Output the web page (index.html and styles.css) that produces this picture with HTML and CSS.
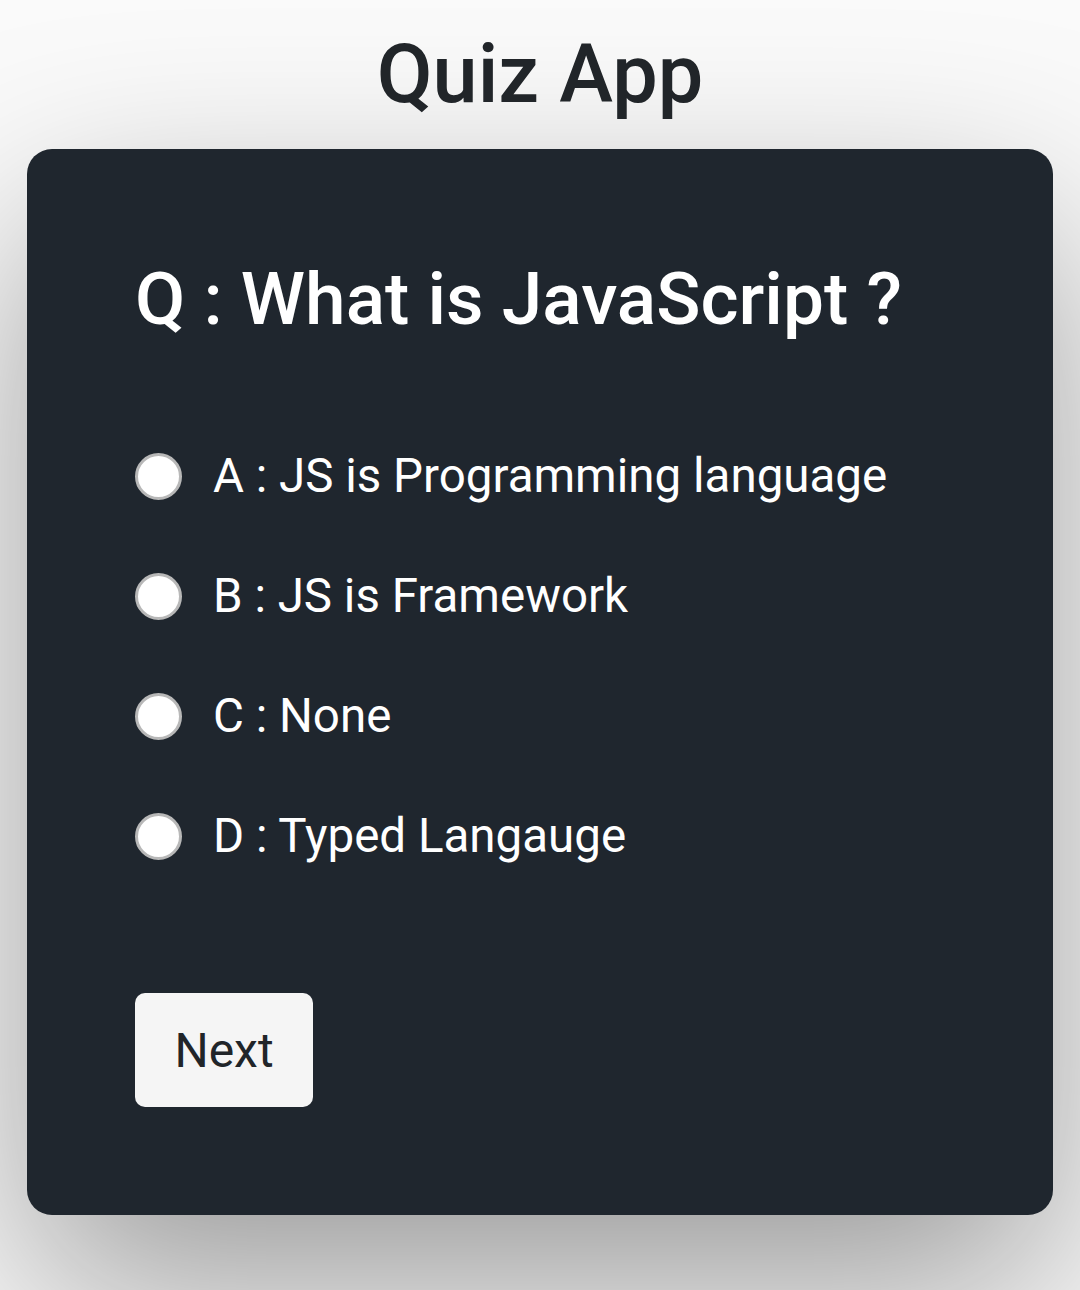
FILE: index.html
```html
<!DOCTYPE html>
<html lang="en">
<head>
<meta charset="utf-8">
<title>Quiz App</title>
<link rel="stylesheet" href="styles.css">
</head>
<body>
  <h1 class="app-title">Quiz App</h1>
  <main class="quiz-card">
    <h2 class="question">Q : What is JavaScript ?</h2>
    <ul class="options">
      <li class="option"><input type="radio" name="answer" id="a" class="radio"><label for="a">A : JS is Programming language</label></li>
      <li class="option"><input type="radio" name="answer" id="b" class="radio"><label for="b">B : JS is Framework</label></li>
      <li class="option"><input type="radio" name="answer" id="c" class="radio"><label for="c">C : None</label></li>
      <li class="option"><input type="radio" name="answer" id="d" class="radio"><label for="d">D : Typed Langauge</label></li>
    </ul>
    <button class="next-btn" type="button">Next</button>
  </main>
</body>
</html>
```

FILE: styles.css
```css
html, body {
  margin: 0;
  padding: 0;
}

body {
  min-height: 1290px;
  background: #fafafa;
  font-family: Roboto, "Noto Sans", sans-serif;
  padding: 27px 27px 0;
  box-sizing: border-box;
  overflow: hidden;
}

.app-title {
  margin: 0;
  text-align: center;
  font-size: 81px;
  line-height: 96px;
  font-weight: 500;
  color: #212529;
}

.quiz-card {
  margin-top: 26px;
  background: #1f262e;
  border-radius: 25px;
  padding: 108px;
  box-shadow: 0 80px 200px rgba(0, 0, 0, 0.38);
}

.question {
  margin: 0;
  font-size: 73px;
  line-height: 84px;
  font-weight: 500;
  color: #ffffff;
}

.options {
  list-style: none;
  margin: 75px 0 0;
  padding: 0;
}

.option {
  display: flex;
  align-items: center;
  gap: 31px;
  height: 120px;
  font-size: 47.5px;
  color: #ffffff;
}

.radio {
  appearance: none;
  -webkit-appearance: none;
  margin: 0;
  width: 47px;
  height: 47px;
  flex: none;
  border-radius: 50%;
  background: #ffffff;
  border: 3px solid #b8b8b8;
  box-sizing: border-box;
}

.next-btn {
  display: block;
  margin-top: 97px;
  width: 178px;
  height: 114px;
  border: none;
  border-radius: 10px;
  background: #f5f5f5;
  color: #212529;
  font-family: Roboto, "Noto Sans", sans-serif;
  font-size: 48px;
  padding: 0;
}
```
